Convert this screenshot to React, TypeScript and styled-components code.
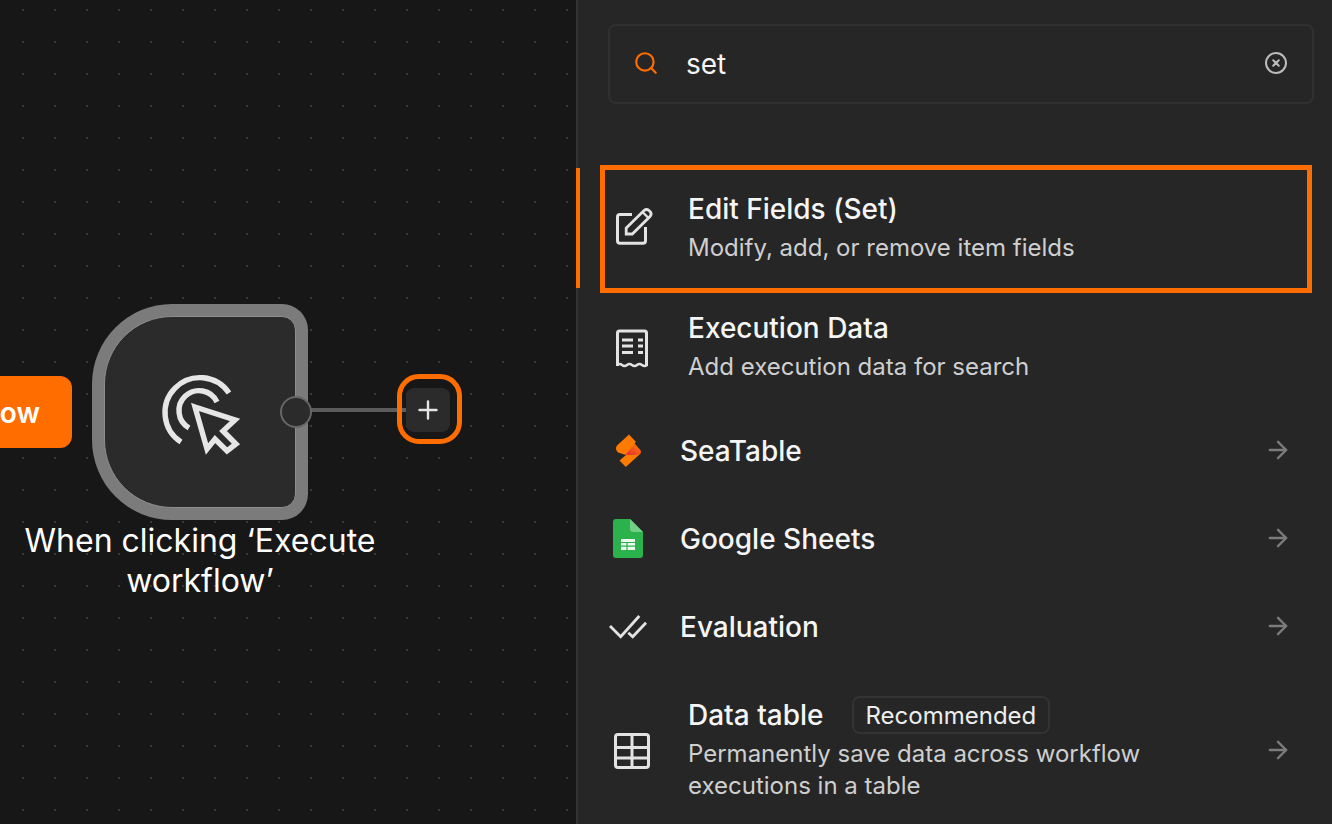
import React from "react";
import styled, { createGlobalStyle } from "styled-components";
import { ArrowRight, Search } from "lucide-react";

const Global = createGlobalStyle`
  html, body { margin: 0; padding: 0; background: #171717; overflow: hidden; }
  *, *::before, *::after { box-sizing: border-box; }
  body { font-family: Inter, "Noto Sans", sans-serif; -webkit-font-smoothing: antialiased; }
`;

const Page = styled.div`
  display: flex;
  width: 1332px;
  height: 824px;
  overflow: hidden;
`;

const Canvas = styled.div`
  position: relative;
  flex: 0 0 576px;
  height: 100%;
  overflow: hidden;
  background-color: #171717;
  background-image: radial-gradient(circle at 1px 1px, #3a3a3a 1px, transparent 1.2px);
  background-size: 32px 32px;
  background-position: 22px 9px;
`;

const RunButton = styled.div`
  position: absolute;
  right: 504px;
  top: 376px;
  height: 72px;
  display: flex;
  align-items: center;
  padding: 2px 32px 0;
  white-space: nowrap;
  background: #ff6d00;
  border-radius: 12px;
  color: #fff;
  font-size: 28px;
  font-weight: 600;
`;

const TriggerNode = styled.div`
  position: absolute;
  left: 92px;
  top: 304px;
  width: 216px;
  height: 216px;
  padding: 12px;
  background: #7b7b7b;
  border-radius: 80px 26px 26px 80px;
`;

const NodeFace = styled.div`
  width: 100%;
  height: 100%;
  display: flex;
  align-items: center;
  justify-content: center;
  background: #2b2b2b;
  border: 1px solid #8e8e8e;
  border-radius: 68px 14px 14px 68px;
`;

const NodeLabel = styled.div`
  position: absolute;
  left: 0;
  top: 521px;
  width: 400px;
  text-align: center;
  color: #fff;
  font-size: 32px;
  line-height: 40px;
  font-weight: 400;
`;

const Handle = styled.div`
  position: absolute;
  left: 280px;
  top: 396px;
  width: 32px;
  height: 32px;
  border-radius: 50%;
  background: #2b2b2b;
  border: 2px solid #666666;
`;

const Connector = styled.div`
  position: absolute;
  left: 311px;
  top: 408px;
  width: 96px;
  height: 4px;
  background: #5c5c5c;
`;

const PlusRing = styled.div`
  position: absolute;
  left: 397px;
  top: 374px;
  width: 65px;
  height: 70px;
  border: 5px solid #ff6d00;
  border-radius: 22px;
`;

const PlusBox = styled.div`
  position: absolute;
  left: 406px;
  top: 388px;
  width: 44px;
  height: 44px;
  display: flex;
  align-items: center;
  justify-content: center;
  background: #2b2b2b;
  border-radius: 8px;
`;

const Panel = styled.div`
  flex: 1;
  height: 100%;
  background: #262626;
  border-left: 2px solid #333333;
`;

const SearchBox = styled.div`
  display: flex;
  align-items: center;
  height: 80px;
  margin: 24px 18px 64px 30px;
  padding: 0 24px 2px 23px;
  border: 2px solid #313131;
  border-radius: 8px;
  color: #f5f5f5;
  font-size: 28px;
`;

const SearchValue = styled.div`
  flex: 1;
  margin-left: 27px;
  padding-top: 2px;
`;

const Row = styled.div<{ $h: number; $active?: boolean }>`
  position: relative;
  display: flex;
  align-items: center;
  height: ${(p) => p.$h}px;
  padding: 0 40px 0 30px;
  ${(p) =>
    p.$active
      ? `
    &::before {
      content: "";
      position: absolute;
      left: -2px;
      top: 0;
      width: 4px;
      height: 120px;
      background: #ff6d00;
    }
    &::after {
      content: "";
      position: absolute;
      left: 22px;
      top: -3px;
      width: 712px;
      height: 128px;
      border: 5px solid #ff6d00;
    }`
      : ""}
`;

const IconSlot = styled.div<{ $wide?: boolean }>`
  flex: 0 0 ${(p) => (p.$wide ? 48 : 40)}px;
  display: flex;
  align-items: center;
  justify-content: center;
  margin-right: 32px;
  color: #e3e3e3;
`;

const RowBody = styled.div`
  flex: 1;
  min-width: 0;
`;

const TitleLine = styled.div`
  display: flex;
  align-items: center;
  gap: 28px;
  margin-bottom: 4px;
`;

const Title = styled.div`
  color: #f5f5f5;
  font-size: 28px;
  line-height: 38px;
  font-weight: 500;
`;

const Desc = styled.div`
  margin: 4px 0 3px;
  color: #cfcfcf;
  font-size: 24px;
  line-height: 32px;
  max-width: 500px;
`;

const Badge = styled.div`
  height: 38px;
  display: flex;
  align-items: center;
  padding: 0 12px;
  border: 2px solid #333333;
  border-radius: 8px;
  color: #ededed;
  font-size: 24px;
`;

const Arrow = styled(ArrowRight)`
  flex: none;
  color: #7c7c7c;
  margin-bottom: 2px;
`;

const PointerIcon = () => (
  <svg width="120" height="100" viewBox="1 2 120 100" fill="none" stroke="#e6e6e6" strokeWidth="5.4">
    <path d="M42 82 A35 35 0 1 1 90 33" />
    <path d="M50 68 A20 20 0 1 1 78 42" />
    <path d="M56 47 L96 60 L84 71 L97 84 L88 91 L76 79 L68 89 Z" />
  </svg>
);

const PlusIcon = () => (
  <svg width="20" height="20" viewBox="0 0 20 20" stroke="#e6e6e6" strokeWidth="2.4" strokeLinecap="round">
    <path d="M10 1.5V18.5M1.5 10H18.5" />
  </svg>
);

const ClearIcon = () => (
  <svg width="24" height="24" viewBox="0 0 24 24" fill="none" stroke="#bdbdbd" strokeWidth="2" strokeLinecap="round">
    <circle cx="12" cy="12" r="10" />
    <path d="M9.2 9.2L14.8 14.8M14.8 9.2L9.2 14.8" />
  </svg>
);

const EditIcon = () => (
  <svg width="48" height="48" viewBox="0 0 48 48" fill="none" stroke="#e3e3e3" strokeWidth="3">
    <path d="M24 10.5H12a2.5 2.5 0 0 0-2.5 2.5V36.7a2.5 2.5 0 0 0 2.5 2.5H35a2.5 2.5 0 0 0 2.5-2.5V23" />
    <path d="M18.2 30V24L36 6.5Q38.5 4.5 41 6.5L42.5 8Q44 10.5 42 12.5L24.3 30Z" strokeWidth="2.8" />
    <path d="M34.5 8L40.5 14" strokeWidth="2.4" />
  </svg>
);

const ReceiptIcon = () => (
  <svg width="48" height="48" viewBox="0 0 48 48" fill="none" stroke="#e3e3e3" strokeWidth="3">
    <path d="M9.5 42V9a2 2 0 0 1 2-2h25a2 2 0 0 1 2 2V42" />
    <path d="M9 41.5q2.5-2.5 5-.5t5 0t5 0t5 0t5 0t5 0" strokeWidth="2.4" />
    <path d="M14 16H25M14 22H25M14 28.5H25M30 16H35M30 22H35M30 28.5H35" />
  </svg>
);

const SeaTableIcon = () => (
  <svg width="40" height="40" viewBox="0 0 40 40">
    <defs>
      <linearGradient id="st" x1="0" y1="1" x2="1" y2="0">
        <stop offset="0.2" stopColor="#e8392f" />
        <stop offset="0.9" stopColor="#ff7a00" />
      </linearGradient>
    </defs>
    <path d="M21 3.5L27.8 10.8L26.5 13L32 19Q33.5 21.5 32 23L17.8 36L11.5 29.5L18 24L10 21.5Q6.5 18 9 14.5Z" fill="#ff7a00" />
    <path d="M27 13L32.5 19.5Q33.5 21.5 32 23L27 24L17 24Z" fill="url(#st)" />
  </svg>
);

const SheetsIcon = () => (
  <svg width="40" height="40" viewBox="0 0 40 40">
    <path d="M8 0H22L35 13V36a3 3 0 0 1-3 3H8a3 3 0 0 1-3-3V3a3 3 0 0 1 3-3Z" fill="#2bb24c" />
    <path d="M22 0L35 13H25a3 3 0 0 1-3-3Z" fill="#72cf86" />
    <path d="M13 20H27V31H13Z" fill="#eef9f0" />
    <path d="M13 23.5H27M13 27.2H27M19 23.5V31" stroke="#2bb24c" strokeWidth="1.2" />
  </svg>
);

const ChecksIcon = () => (
  <svg width="40" height="40" viewBox="0 0 40 40" fill="none" stroke="#e3e3e3" strokeWidth="2.8">
    <path d="M2 19L12.7 29.7L31.3 9" />
    <path d="M20.3 25.7L24.7 29.7L38 15.7" />
  </svg>
);

const TableIcon = () => (
  <svg width="48" height="48" viewBox="0 0 48 48" fill="none" stroke="#e3e3e3" strokeWidth="3">
    <rect x="7.5" y="7.5" width="33" height="33" rx="2.5" />
    <path d="M7.5 20.5H40.5M7.5 31H40.5M24 7.5V40.5" />
  </svg>
);

export default function App() {
  return (
    <Page>
      <Global />
      <Canvas>
        <RunButton>Test workflow</RunButton>
        <TriggerNode>
          <NodeFace>
            <PointerIcon />
          </NodeFace>
        </TriggerNode>
        <Connector />
        <Handle />
        <PlusRing />
        <PlusBox>
          <PlusIcon />
        </PlusBox>
        <NodeLabel>
          When clicking ‘Execute
          <br />
          workflow’
        </NodeLabel>
      </Canvas>
      <Panel>
        <SearchBox>
          <Search size={26} color="#ff6d00" strokeWidth={2} />
          <SearchValue>set</SearchValue>
          <ClearIcon />
        </SearchBox>
        <Row $h={120} $active>
          <IconSlot $wide>
            <EditIcon />
          </IconSlot>
          <RowBody>
            <Title>Edit Fields (Set)</Title>
            <Desc>Modify, add, or remove item fields</Desc>
          </RowBody>
        </Row>
        <Row $h={119}>
          <IconSlot $wide>
            <ReceiptIcon />
          </IconSlot>
          <RowBody>
            <Title>Execution Data</Title>
            <Desc>Add execution data for search</Desc>
          </RowBody>
        </Row>
        <Row $h={88}>
          <IconSlot>
            <SeaTableIcon />
          </IconSlot>
          <RowBody>
            <Title>SeaTable</Title>
          </RowBody>
          <Arrow size={28} strokeWidth={2} />
        </Row>
        <Row $h={88}>
          <IconSlot>
            <SheetsIcon />
          </IconSlot>
          <RowBody>
            <Title>Google Sheets</Title>
          </RowBody>
          <Arrow size={28} strokeWidth={2} />
        </Row>
        <Row $h={88}>
          <IconSlot>
            <ChecksIcon />
          </IconSlot>
          <RowBody>
            <Title>Evaluation</Title>
          </RowBody>
          <Arrow size={28} strokeWidth={2} />
        </Row>
        <Row $h={159}>
          <IconSlot $wide>
            <TableIcon />
          </IconSlot>
          <RowBody>
            <TitleLine>
              <Title>Data table</Title>
              <Badge>Recommended</Badge>
            </TitleLine>
            <Desc>Permanently save data across workflow executions in a table</Desc>
          </RowBody>
          <Arrow size={28} strokeWidth={2} />
        </Row>
      </Panel>
    </Page>
  );
}
